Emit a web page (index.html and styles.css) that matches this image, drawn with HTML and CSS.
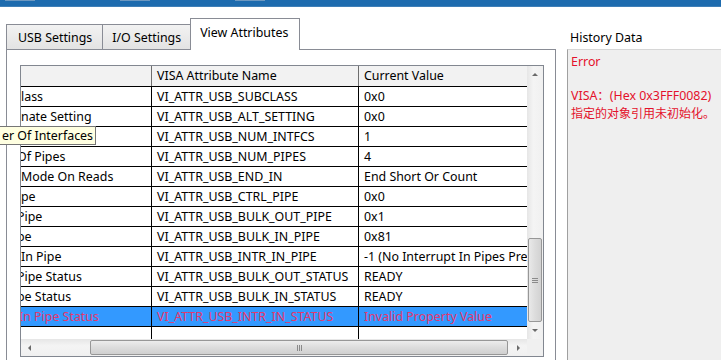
FILE: index.html
```html
<!DOCTYPE html>
<html lang="en">
<head>
    <meta charset="UTF-8">
    <title>VISA Test Panel - View Attributes</title>
    <link rel="stylesheet" href="styles.css">
</head>
<body>

    <!-- Window title bar (bottom edge only) -->
    <div class="titlebar">
        <span class="glint"></span>
        <span class="glint"></span>
        <span class="glint"></span>
    </div>

    <div class="main">
        <div class="tabs-area">
            <div class="tabstrip">
                <div class="tab">USB Settings</div>
                <div class="tab">I/O Settings</div>
                <div class="tab active">View Attributes</div>
            </div>

            <div class="tabpanel">
                <div class="grid-widget">
                    <div class="viewport">
                        <div class="row head">
                            <div class="c1"></div>
                            <div class="c2">VISA Attribute Name</div>
                            <div class="c3">Current Value</div>
                        </div>
                        <div class="row">
                            <div class="c1">lass</div>
                            <div class="c2">VI_ATTR_USB_SUBCLASS</div>
                            <div class="c3">0x0</div>
                        </div>
                        <div class="row">
                            <div class="c1">nate Setting</div>
                            <div class="c2">VI_ATTR_USB_ALT_SETTING</div>
                            <div class="c3">0x0</div>
                        </div>
                        <div class="row">
                            <div class="c1"></div>
                            <div class="c2">VI_ATTR_USB_NUM_INTFCS</div>
                            <div class="c3">1</div>
                        </div>
                        <div class="row">
                            <div class="c1"><span class="cut">Of Pipes</span></div>
                            <div class="c2">VI_ATTR_USB_NUM_PIPES</div>
                            <div class="c3">4</div>
                        </div>
                        <div class="row">
                            <div class="c1">Mode On Reads</div>
                            <div class="c2">VI_ATTR_USB_END_IN</div>
                            <div class="c3">End Short Or Count</div>
                        </div>
                        <div class="row">
                            <div class="c1">pe</div>
                            <div class="c2">VI_ATTR_USB_CTRL_PIPE</div>
                            <div class="c3">0x0</div>
                        </div>
                        <div class="row">
                            <div class="c1"><span class="cut">Pipe</span></div>
                            <div class="c2">VI_ATTR_USB_BULK_OUT_PIPE</div>
                            <div class="c3">0x1</div>
                        </div>
                        <div class="row">
                            <div class="c1"><span class="cut">pe</span></div>
                            <div class="c2">VI_ATTR_USB_BULK_IN_PIPE</div>
                            <div class="c3">0x81</div>
                        </div>
                        <div class="row">
                            <div class="c1">In Pipe</div>
                            <div class="c2">VI_ATTR_USB_INTR_IN_PIPE</div>
                            <div class="c3">-1 (No Interrupt In Pipes Present)</div>
                        </div>
                        <div class="row">
                            <div class="c1"><span class="cut">Pipe Status</span></div>
                            <div class="c2">VI_ATTR_USB_BULK_OUT_STATUS</div>
                            <div class="c3">READY</div>
                        </div>
                        <div class="row">
                            <div class="c1"><span class="cut">pe Status</span></div>
                            <div class="c2">VI_ATTR_USB_BULK_IN_STATUS</div>
                            <div class="c3">READY</div>
                        </div>
                        <div class="row selected">
                            <div class="c1"><span class="cut-small">In Pipe Status</span></div>
                            <div class="c2">VI_ATTR_USB_INTR_IN_STATUS</div>
                            <div class="c3">Invalid Property Value</div>
                        </div>
                        <div class="row blank">
                            <div class="c1"></div>
                            <div class="c2"></div>
                            <div class="c3"></div>
                        </div>
                    </div>

                    <!-- vertical scrollbar -->
                    <div class="vscroll">
                        <div class="sbtn"><span class="arrow up"></span></div>
                        <div class="vtrack">
                            <div class="vthumb"><span class="grip"></span><span class="grip"></span><span class="grip"></span></div>
                        </div>
                        <div class="sbtn"><span class="arrow down"></span></div>
                    </div>

                    <!-- horizontal scrollbar -->
                    <div class="hscroll">
                        <div class="hbtn"><span class="arrow left"></span></div>
                        <div class="htrack">
                            <div class="hthumb"><span class="hgrip"></span><span class="hgrip"></span><span class="hgrip"></span></div>
                        </div>
                        <div class="hbtn"><span class="arrow right"></span></div>
                    </div>
                    <div class="corner"></div>
                </div>
            </div>
        </div>

        <div class="history">
            <div class="history-label">History Data</div>
            <div class="history-box">
                <div>Error</div>
                <div>&nbsp;</div>
                <div>VISA：(Hex 0x3FFF0082)</div>
                <div class="cjk">指定的对象引用未初始化。</div>
            </div>
        </div>
    </div>

    <!-- Tooltip hovering over the first column -->
    <div class="tooltip">er Of Interfaces</div>

</body>
</html>
```

FILE: styles.css
```css
body {
    margin: 0;
    height: 360px;
    background: #ffffff;
    font-family: "Noto Sans", "Noto Sans CJK SC", sans-serif;
    font-size: 12.4px;
    color: #000;
    overflow: hidden;
}

/* Title bar strip at the very top */
.titlebar {
    height: 6px;
    background: #1d6bae;
    border-bottom: 1px solid #3f7fb7;
    display: flex;
    gap: 85px;
    padding-left: 5px;
}

.glint {
    width: 30px;
    height: 1px;
    background: #6d98c0;
}

.main {
    display: flex;
    padding: 15px 0 0 6px;
}

.tabs-area {
    width: 550px;
}

/* Tabs */
.tabstrip {
    display: flex;
    align-items: flex-end;
    height: 27px;
}

.tab {
    height: 24px;
    padding: 0 10px 0 11px;
    display: flex;
    align-items: center;
    background: linear-gradient(#f2f2f2, #e3e3e3);
    border: 1px solid #898c95;
    border-bottom: none;
    color: #000;
}

.tab + .tab {
    margin-left: -1px;
    padding: 0 9px 0 9px;
}

.tab.active {
    height: 27px;
    margin-bottom: -1px;
    margin-left: -1px;
    padding: 0 11px 4px 9px;
    background: #fff;
    position: relative;
    z-index: 1;
}

.tabpanel {
    height: 295px;
    border: 1px solid #898c95;
    border-bottom: none;
    background: #fff;
    padding: 15px 0 0 13px;
}

/* The attribute table */
.grid-widget {
    width: 522px;
    border: 1px solid #828790;
    display: grid;
    grid-template-columns: 506px 16px;
    grid-template-rows: 273px 17px;
}

.viewport {
    overflow: hidden;
}

.row {
    display: flex;
    height: 19px;
    line-height: 19px;
    border-bottom: 1px solid #000;
    white-space: nowrap;
}

.row .c1 {
    width: 130px;
    border-right: 1px solid #000;
    overflow: hidden;
}

.row .c2 {
    width: 201px;
    padding-left: 5px;
    border-right: 1px solid #000;
    overflow: hidden;
}

.row .c3 {
    flex: 1;
    padding-left: 5px;
    overflow: hidden;
}

.row.head {
    height: 20px;
    line-height: 20px;
    background: #f2f2f2;
}

.row.head .c1,
.row.head .c2 {
    border-right-color: #6e6e6e;
}

.row.selected {
    background: #3399ff;
    color: #e3386e;
}

.row.blank {
    border-bottom: none;
    height: 13px;
}

.cut {
    margin-left: -4px;
}

.cut-small {
    margin-left: -2px;
}

/* Scrollbars */
.vscroll {
    display: flex;
    flex-direction: column;
    background: linear-gradient(90deg, #e6e6e6, #f4f4f4 40%, #f0f0f0);
}

.sbtn {
    height: 17px;
    display: flex;
    align-items: center;
    justify-content: center;
}

.vtrack {
    flex: 1;
    display: flex;
    flex-direction: column;
    justify-content: flex-end;
    padding: 0 1px;
}

.vthumb {
    height: 82px;
    border: 1px solid #979797;
    border-radius: 2px;
    background: linear-gradient(90deg, #e9e9e9, #dcdcdc 50%, #d2d2d2);
    display: flex;
    flex-direction: column;
    align-items: center;
    justify-content: center;
    gap: 1px;
}

.grip {
    width: 6px;
    height: 1px;
    background: #8a8a8a;
}

.hscroll {
    display: flex;
    background: linear-gradient(#e6e6e6, #f4f4f4 40%, #f0f0f0);
}

.hbtn {
    width: 17px;
    display: flex;
    align-items: center;
    justify-content: center;
}

.htrack {
    flex: 1;
    display: flex;
    align-items: center;
    padding: 1px 0;
}

.hthumb {
    height: 13px;
    width: 416px;
    margin-left: 52px;
    border: 1px solid #979797;
    border-radius: 2px;
    background: linear-gradient(#ececec, #dcdcdc 50%, #d0d0d0);
    display: flex;
    justify-content: center;
    align-items: center;
    gap: 1px;
}

.hgrip {
    width: 1px;
    height: 6px;
    background: #8a8a8a;
}

.corner {
    background: #f0f0f0;
}

.arrow {
    width: 0;
    height: 0;
    border: 3px solid transparent;
}

.arrow.up {
    border-bottom: 3px solid #6a6a6a;
    border-top: none;
}

.arrow.down {
    border-top: 3px solid #6a6a6a;
    border-bottom: none;
}

.arrow.left {
    border-right: 3px solid #6a6a6a;
    border-left: none;
}

.arrow.right {
    border-left: 3px solid #6a6a6a;
    border-right: none;
}

/* History panel on the right */
.history {
    flex: 1;
    margin-left: 11px;
}

.history-label {
    height: 27px;
    line-height: 20px;
    padding-left: 3px;
    box-sizing: border-box;
    padding-top: 6px;
}

.history-box {
    height: 307px;
    background: #efefef;
    border-top: 1px solid #d6d6d6;
    border-left: 1px solid #a0a0a0;
    padding: 3px 0 0 3px;
    color: #e4112b;
    line-height: 17px;
}

.history-box .cjk {
    font-family: "Noto Sans CJK SC", sans-serif;
    font-size: 12px;
}

/* Tooltip */
.tooltip {
    position: absolute;
    top: 126px;
    left: -1px;
    height: 17px;
    line-height: 17px;
    padding: 0 2px 0 2px;
    background: #ffffe1;
    border: 1px solid #767676;
    white-space: nowrap;
}
```
